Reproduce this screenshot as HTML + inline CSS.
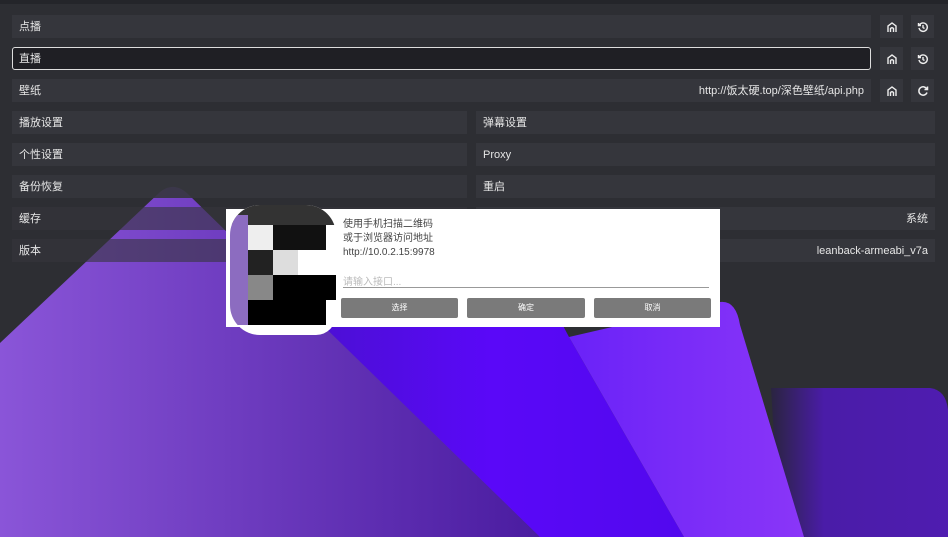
<!DOCTYPE html>
<html><head><meta charset="utf-8"><style>
*{margin:0;padding:0;box-sizing:border-box}
body{width:948px;height:537px;overflow:hidden;background:#2d2e33;position:relative;font-family:"Liberation Sans","Noto Sans CJK SC",sans-serif;font-size:11px;color:#e6e6e6}
.r{position:absolute;height:23px;background:#35363c;line-height:24px;padding:0 7px}
.r .v{position:absolute;right:7px;top:0}
.b{position:absolute;width:23px;height:23px;background:#35363c;display:flex;align-items:center;justify-content:center}
.dlg{position:absolute;left:226px;top:209px;width:494px;height:118px;background:#fff}
.btn{position:absolute;top:89px;height:20px;background:#7a7a7a;color:#fff;font-size:8px;text-align:center;line-height:20px;border-radius:2px}
</style></head><body>
<div style="position:absolute;left:0;top:0;width:948px;height:4px;background:#24252a"></div>
<svg style="position:absolute;left:0;top:0" width="948" height="537">
<defs>
<linearGradient id="g1" x1="0" y1="0" x2="1" y2="0"><stop offset="0" stop-color="#8a55d8"/><stop offset="1" stop-color="#4a1ca0"/></linearGradient>
<linearGradient id="g2" x1="0" y1="0" x2="1" y2="0"><stop offset="0" stop-color="#4a10d0"/><stop offset="0.5" stop-color="#5a08f8"/><stop offset="1" stop-color="#5208ee"/></linearGradient>
<linearGradient id="g3" x1="0" y1="0" x2="1" y2="0"><stop offset="0" stop-color="#6a22f8"/><stop offset="1" stop-color="#8a36f8"/></linearGradient>
<linearGradient id="g4" x1="0" y1="0" x2="1" y2="0"><stop offset="0" stop-color="#2a2440"/><stop offset="0.3" stop-color="#4a1ca8"/><stop offset="1" stop-color="#4f1cb0"/></linearGradient>
</defs>
<path d="M771 388 L930 388 Q946 390 948 410 L948 537 L780 537 Z" fill="url(#g4)"/>
<path d="M300 310 L560 320 L569 337 L684 537 L530 537 Z" fill="url(#g2)"/>
<path d="M569 337 L720 302 Q736 300 740 325 L804 537 L684 537 Z" fill="url(#g3)"/>
<path d="M0 343 L160 192 Q175 180 190 196 L540 537 L0 537 Z" fill="url(#g1)"/>
</svg>
<div class="r" style="left:12px;top:15px;width:859px">点播</div>
<div class="r" style="left:12px;top:47px;width:859px;background:#1f1f24;border:1px solid #ddd;border-radius:3px;line-height:22px;padding:0 6px">直播</div>
<div class="r" style="left:12px;top:79px;width:859px">壁纸<span class="v">http://饭太硬.top/深色壁纸/api.php</span></div>
<div class="b" style="left:880px;top:15px"><svg width="12" height="12" viewBox="0 0 12 12" fill="none" stroke="#eee" stroke-width="1.4"><path d="M2 11V5L6 2L10 5V11M4.5 11V7.5Q6 6 7.5 7.5V11"/></svg></div>
<div class="b" style="left:911px;top:15px"><svg width="12" height="12" viewBox="0 0 12 12" fill="none" stroke="#eee" stroke-width="1.4"><path d="M2.5 4A4.2 4.2 0 1 1 2 7M1.5 2V4.5H4M6 4V6.5L7.5 7.5"/></svg></div>
<div class="b" style="left:880px;top:47px"><svg width="12" height="12" viewBox="0 0 12 12" fill="none" stroke="#eee" stroke-width="1.4"><path d="M2 11V5L6 2L10 5V11M4.5 11V7.5Q6 6 7.5 7.5V11"/></svg></div>
<div class="b" style="left:911px;top:47px"><svg width="12" height="12" viewBox="0 0 12 12" fill="none" stroke="#eee" stroke-width="1.4"><path d="M2.5 4A4.2 4.2 0 1 1 2 7M1.5 2V4.5H4M6 4V6.5L7.5 7.5"/></svg></div>
<div class="b" style="left:880px;top:79px"><svg width="12" height="12" viewBox="0 0 12 12" fill="none" stroke="#eee" stroke-width="1.4"><path d="M2 11V5L6 2L10 5V11M4.5 11V7.5Q6 6 7.5 7.5V11"/></svg></div>
<div class="b" style="left:911px;top:79px"><svg width="12" height="12" viewBox="0 0 12 12" fill="none" stroke="#eee" stroke-width="1.5"><path d="M9.8 4A4.2 4.2 0 1 0 10 7.5M10.5 1.5V4.5H7.5"/></svg></div>
<div class="r" style="left:12px;top:111px;width:455px">播放设置</div>
<div class="r" style="left:476px;top:111px;width:459px">弹幕设置</div>
<div class="r" style="left:12px;top:143px;width:455px">个性设置</div>
<div class="r" style="left:476px;top:143px;width:459px">Proxy</div>
<div class="r" style="left:12px;top:175px;width:455px;background:rgba(53,54,60,.9)">备份恢复</div>
<div class="r" style="left:476px;top:175px;width:459px">重启</div>
<div class="r" style="left:12px;top:207px;width:455px;background:rgba(53,54,60,.6)">缓存</div>
<div class="r" style="left:476px;top:207px;width:459px"><span class="v">系统</span></div>
<div class="r" style="left:12px;top:239px;width:455px;background:rgba(53,54,60,.6)">版本</div>
<div class="r" style="left:476px;top:239px;width:459px"><span class="v">leanback-armeabi_v7a</span></div>
<div class="dlg">
<div style="position:absolute;left:4px;top:-4px;width:106px;height:130px;background:#fff;border-radius:30px 30px 20px 30px;overflow:hidden">
<div style="position:absolute;left:0;top:0;width:106px;height:20px;background:#333"></div>
<div style="position:absolute;left:0;top:10px;width:18px;height:110px;background:#8c6cc0"></div>
<div style="position:absolute;left:18px;top:20px;width:25px;height:25px;background:#eee"></div>
<div style="position:absolute;left:43px;top:20px;width:53px;height:25px;background:#111"></div>
<div style="position:absolute;left:18px;top:45px;width:25px;height:25px;background:#222"></div>
<div style="position:absolute;left:43px;top:45px;width:25px;height:25px;background:#ddd"></div>
<div style="position:absolute;left:18px;top:70px;width:25px;height:25px;background:#888"></div>
<div style="position:absolute;left:43px;top:70px;width:63px;height:25px;background:#000"></div>
<div style="position:absolute;left:18px;top:95px;width:78px;height:25px;background:#000"></div>
</div>
<div style="position:absolute;left:117px;top:9px;color:#444;font-size:10px;line-height:14px">使用手机扫描二维码<br>或于浏览器访问地址<br>http://10.0.2.15:9978</div>
<div style="position:absolute;left:117px;top:64px;color:#bbb;font-size:10px">请输入接口...</div>
<div style="position:absolute;left:117px;top:78px;width:366px;height:1px;background:#999"></div>
<div class="btn" style="left:115px;width:117px">选择</div>
<div class="btn" style="left:241px;width:118px">确定</div>
<div class="btn" style="left:368px;width:117px">取消</div>
</div>
</body></html>
